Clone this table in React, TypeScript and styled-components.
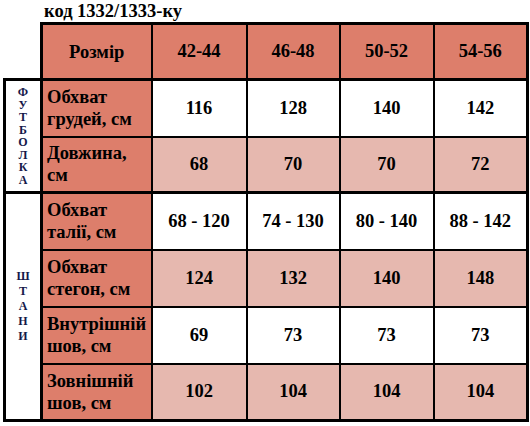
import React from "react";
import styled, { createGlobalStyle } from "styled-components";

const GlobalStyle = createGlobalStyle`
  html, body {
    margin: 0;
    padding: 0;
    background: #fff;
  }
  body {
    font-family: "Liberation Serif", "Times New Roman", serif;
    color: #000;
  }
`;

const Page = styled.div`
  width: 530px;
  height: 426px;
  padding: 2px 0 0 3px;
  box-sizing: border-box;
`;

const Title = styled.div`
  margin-left: 41px;
  height: 20px;
  font-size: 18.5px;
  font-weight: 700;
  line-height: 18px;
`;

const Table = styled.table`
  border-collapse: collapse;
  table-layout: fixed;
  width: 523px;
`;

const Col = styled.col<{ $w: number }>`
  width: ${({ $w }) => $w}px;
`;

const Row = styled.tr<{ $h: number }>`
  height: ${({ $h }) => $h}px;
`;

const Blank = styled.td`
  border: none;
  padding: 0;
`;

type Tone = "head" | "light" | "white";

const Cell = styled.td<{ $tone?: Tone; $top?: number; $bottom?: number }>`
  border: 2px solid #000;
  border-top-width: ${({ $top }) => $top ?? 2}px;
  border-bottom-width: ${({ $bottom }) => $bottom ?? 2}px;
  background: ${({ $tone }) =>
    $tone === "head" ? "#dd7e6b" : $tone === "light" ? "#e6b8af" : "#fff"};
  font-size: 18.5px;
  font-weight: 700;
  text-align: center;
  vertical-align: middle;
  padding: 0;
  &:last-child {
    border-right-width: 3px;
  }
`;

const Label = styled(Cell)<{ $center?: boolean }>`
  text-align: ${({ $center }) => ($center ? "center" : "left")};
  padding-left: ${({ $center }) => ($center ? 0 : 4)}px;
  line-height: 22px;
  border-left-width: 3px;
`;

const Side = styled.td<{ $gap: number }>`
  border: 3px solid #000;
  padding: 0;
  vertical-align: middle;
  text-align: center;
  font-size: 12px;
  font-weight: 700;
  line-height: ${({ $gap }) => $gap}px;
  color: #15184a;
`;

const Letter = styled.span`
  display: block;
`;

const widths = [37, 110, 95, 93, 94, 94];
const sizes = ["42-44", "46-48", "50-52", "54-56"];

type Line = { label: [string, string]; values: string[] };

const shirt: Line[] = [
  { label: ["Обхват", "грудей, см"], values: ["116", "128", "140", "142"] },
  { label: ["Довжина,", "см"], values: ["68", "70", "70", "72"] },
];

const pants: Line[] = [
  { label: ["Обхват", "талії, см"], values: ["68 - 120", "74 - 130", "80 - 140", "88 - 142"] },
  { label: ["Обхват", "стегон, см"], values: ["124", "132", "140", "148"] },
  { label: ["Внутрішній", "шов, см"], values: ["69", "73", "73", "73"] },
  { label: ["Зовнішній", "шов, см"], values: ["102", "104", "104", "104"] },
];

const Vertical = ({ text }: { text: string }) => (
  <>
    {text.split("").map((ch, i) => (
      <Letter key={i}>{ch}</Letter>
    ))}
  </>
);

type GroupProps = {
  lines: Line[];
  heights: number[];
  title: string;
  gap: number;
};

const Group = ({ lines, heights, title, gap }: GroupProps) => (
  <>
    {lines.map((line, index) => {
      const tone: Tone = index % 2 === 0 ? "white" : "light";
      const top = index === 0 ? 3 : 2;
      const bottom = index === lines.length - 1 ? 3 : 2;
      return (
        <Row $h={heights[index]} key={line.label.join(" ")}>
          {index === 0 && (
            <Side rowSpan={lines.length} $gap={gap}>
              <Vertical text={title} />
            </Side>
          )}
          <Label $tone="head" $top={top} $bottom={bottom}>
            {line.label[0]}
            <br />
            {line.label[1]}
          </Label>
          {line.values.map((v, i) => (
            <Cell key={i} $tone={tone} $top={top} $bottom={bottom}>
              {v}
            </Cell>
          ))}
        </Row>
      );
    })}
  </>
);

export default function App() {
  return (
    <>
      <GlobalStyle />
      <Page>
        <Title>код 1332/1333-ку</Title>
        <Table>
          <colgroup>
            {widths.map((w, i) => (
              <Col key={i} $w={w} />
            ))}
          </colgroup>
          <tbody>
            <Row $h={56}>
              <Blank />
              <Label $tone="head" $top={3} $bottom={3} $center>
                Розмір
              </Label>
              {sizes.map((s) => (
                <Cell key={s} $tone="head" $top={3} $bottom={3}>
                  {s}
                </Cell>
              ))}
            </Row>
            <Group lines={shirt} heights={[57, 56]} title="ФУТБОЛКА" gap={12.5} />
            <Group lines={pants} heights={[57, 57, 57, 57]} title="ШТАНИ" gap={15} />
          </tbody>
        </Table>
      </Page>
    </>
  );
}
